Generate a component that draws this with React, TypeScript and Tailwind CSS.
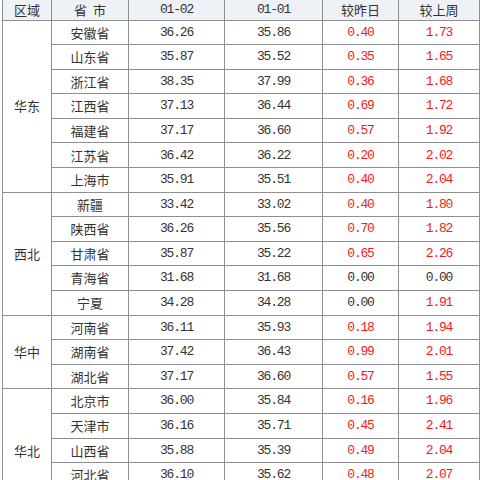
const groups: { region: string; rows: [string, string, string, string, string][] }[] = [
  {
    region: '华东',
    rows: [
      ['安徽省', '36.26', '35.86', '0.40', '1.73'],
      ['山东省', '35.87', '35.52', '0.35', '1.65'],
      ['浙江省', '38.35', '37.99', '0.36', '1.68'],
      ['江西省', '37.13', '36.44', '0.69', '1.72'],
      ['福建省', '37.17', '36.60', '0.57', '1.92'],
      ['江苏省', '36.42', '36.22', '0.20', '2.02'],
      ['上海市', '35.91', '35.51', '0.40', '2.04'],
    ],
  },
  {
    region: '西北',
    rows: [
      ['新疆', '33.42', '33.02', '0.40', '1.80'],
      ['陕西省', '36.26', '35.56', '0.70', '1.82'],
      ['甘肃省', '35.87', '35.22', '0.65', '2.26'],
      ['青海省', '31.68', '31.68', '0.00', '0.00'],
      ['宁夏', '34.28', '34.28', '0.00', '1.91'],
    ],
  },
  {
    region: '华中',
    rows: [
      ['河南省', '36.11', '35.93', '0.18', '1.94'],
      ['湖南省', '37.42', '36.43', '0.99', '2.01'],
      ['湖北省', '37.17', '36.60', '0.57', '1.55'],
    ],
  },
  {
    region: '华北',
    rows: [
      ['北京市', '36.00', '35.84', '0.16', '1.96'],
      ['天津市', '36.16', '35.71', '0.45', '2.41'],
      ['山西省', '35.88', '35.39', '0.49', '2.04'],
      ['河北省', '36.10', '35.62', '0.48', '2.07'],
      ['内蒙古', '35.40', '35.10', '0.30', '1.60'],
    ],
  },
];

const cjk = "font-['Noto_Sans_CJK_SC',sans-serif] text-[13px]";
const num = "font-['Liberation_Mono',monospace] text-[13px] tracking-[-1.2px]";
const cell = 'border border-[#8f8f8f] text-center align-middle p-0';

// zero change stays dark, anything else is red
const diffColor = (v: string) => (v === '0.00' ? 'text-[#333]' : 'text-[#f01b1b]');

export default function App() {
  return (
    <div className="w-[480px] h-[480px] overflow-hidden bg-white">
      <table className="-mt-[2px] ml-[2px] w-[477px] table-fixed border-collapse text-[#333]">
        <colgroup>
          <col className="w-[49px]" />
          <col className="w-[77px]" />
          <col className="w-[96px]" />
          <col className="w-[98px]" />
          <col className="w-[76px]" />
          <col className="w-[81px]" />
        </colgroup>
        <thead>
          <tr className="h-[21.5px] bg-[#eef2f7]">
            <th className={`${cell} ${cjk} font-normal`}>区域</th>
            <th className={`${cell} ${cjk} font-normal`}>省&nbsp;&nbsp;市</th>
            <th className={`${cell} ${num} font-normal`}>01-02</th>
            <th className={`${cell} ${num} font-normal`}>01-01</th>
            <th className={`${cell} ${cjk} font-normal`}>较昨日</th>
            <th className={`${cell} ${cjk} font-normal`}>较上周</th>
          </tr>
        </thead>
        <tbody>
          {groups.map((g) =>
            g.rows.map((r, i) => (
              <tr key={g.region + r[0]} className="h-[24.6px]">
                {i === 0 && (
                  <td rowSpan={g.rows.length} className={`${cell} ${cjk}`}>
                    {g.region}
                  </td>
                )}
                <td className={`${cell} ${cjk}`}>{r[0]}</td>
                <td className={`${cell} ${num}`}>{r[1]}</td>
                <td className={`${cell} ${num}`}>{r[2]}</td>
                <td className={`${cell} ${num} ${diffColor(r[3])}`}>{r[3]}</td>
                <td className={`${cell} ${num} ${diffColor(r[4])}`}>{r[4]}</td>
              </tr>
            ))
          )}
        </tbody>
      </table>
    </div>
  );
}
